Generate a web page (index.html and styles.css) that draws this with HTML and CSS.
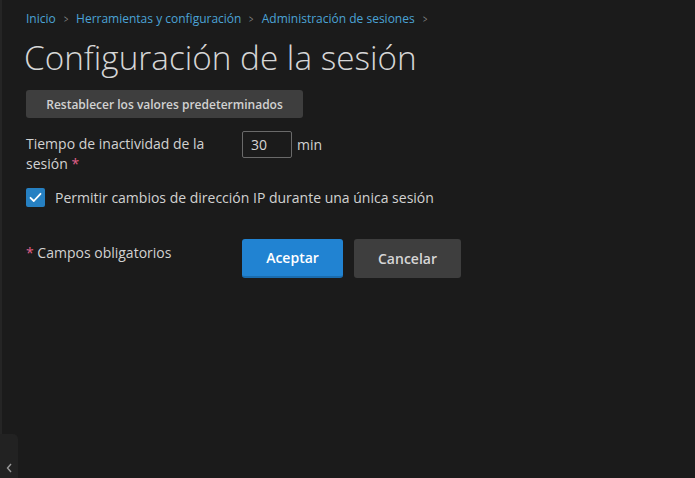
FILE: index.html
```html
<!DOCTYPE html>
<html lang="es">
<head>
<meta charset="utf-8">
<title>Configuración de la sesión</title>
<link rel="stylesheet" href="styles.css">
</head>
<body>
<div class="app">
  <div class="rail"></div>
  <main class="content">
    <nav class="crumbs">
      <a href="#">Inicio</a><span class="sep">&gt;</span>
      <a href="#">Herramientas y configuración</a><span class="sep">&gt;</span>
      <a href="#">Administración de sesiones</a><span class="sep">&gt;</span>
    </nav>
    <h1 class="title">Configuración de la sesión</h1>
    <button class="btn-reset">Restablecer los valores predeterminados</button>
    <div class="field-row">
      <label class="field-label">Tiempo de inactividad de la sesión <span class="req">*</span></label>
      <input class="field-input" type="text" value="30">
      <span class="unit">min</span>
    </div>
    <div class="check-row">
      <span class="checkbox">
        <svg width="13" height="11" viewBox="0 0 13 11"><path d="M1.5 5.8 L4.8 9 L11.5 1.8" fill="none" stroke="#fff" stroke-width="1.8" stroke-linecap="round" stroke-linejoin="round"/></svg>
      </span>
      <span class="check-text">Permitir cambios de dirección IP durante una única sesión</span>
    </div>
    <div class="actions">
      <span class="required-note"><span class="req">*</span> Campos obligatorios</span>
      <button class="btn btn-primary">Aceptar</button>
      <button class="btn btn-secondary">Cancelar</button>
    </div>
  </main>
  <div class="side-tab">
    <svg width="6" height="10" viewBox="0 0 6 10"><path d="M5 1 L1.5 5 L5 9" fill="none" stroke="#9a9a9a" stroke-width="1.4"/></svg>
  </div>
</div>
</body>
</html>
```

FILE: styles.css
```css
html, body {
  margin: 0;
  padding: 0;
  background: #1b1b1b;
  height: 100%;
  overflow: hidden;
}
body {
  font-family: "Open Sans", "Noto Sans", sans-serif;
  color: #d4d4d4;
}
.app {
  position: relative;
  height: 478px;
  display: flex;
}
.rail {
  width: 2px;
  height: 443px;
  background: #252525;
  flex: none;
}
.content {
  flex: 1;
  padding: 10px 0 0 24px;
}
.crumbs {
  font-size: 12px;
  line-height: 17px;
  display: flex;
  align-items: center;
}
.crumbs a {
  color: #4ba3d6;
  text-decoration: none;
}
.crumbs .sep {
  color: #8a8a8a;
  font-size: 11px;
  margin: 0 7px 0 7px;
  transform: scaleX(0.7);
  display: inline-block;
}
.title {
  margin: 10px 0 0 -2px;
  font-weight: 300;
  font-size: 33.3px;
  line-height: 40px;
  color: #d6d6d6;
  letter-spacing: 0;
}
.btn-reset {
  margin-top: 13px;
  width: 277px;
  height: 28px;
  border: 0;
  border-radius: 3px;
  background: #3e3e3e;
  color: #d2d2d2;
  font-family: inherit;
  font-size: 12px;
  font-weight: 600;
  padding: 0;
  display: block;
}
.field-row {
  margin-top: 13px;
  display: flex;
  align-items: flex-start;
}
.field-label {
  width: 200px;
  font-size: 14px;
  line-height: 20px;
  padding-top: 3px;
  color: #d2d2d2;
  margin-right: 16px;
}
.req {
  color: #e0608a;
}
.field-input {
  width: 50px;
  height: 27px;
  box-sizing: border-box;
  background: #1b1b1b;
  border: 1px solid #6a6a6a;
  border-radius: 2px;
  color: #d6d6d6;
  font-family: inherit;
  font-size: 14px;
  padding: 0 0 0 8px;
  margin: 0;
}
.unit {
  font-size: 14px;
  line-height: 27px;
  margin-left: 5px;
  color: #d2d2d2;
}
.check-row {
  margin-top: 14px;
  display: flex;
  align-items: center;
}
.checkbox {
  width: 19px;
  height: 19px;
  border-radius: 2px;
  background: #2680c2;
  display: flex;
  align-items: center;
  justify-content: center;
  margin-right: 10px;
}
.check-text {
  font-size: 14px;
  color: #d2d2d2;
}
.actions {
  margin-top: 32px;
  display: flex;
  align-items: flex-start;
}
.required-note {
  width: 216px;
  font-size: 14px;
  line-height: 20px;
  padding-top: 4px;
  color: #d2d2d2;
}
.btn {
  height: 39px;
  border: 0;
  border-radius: 3px;
  font-family: inherit;
  font-size: 14px;
  font-weight: 600;
  padding: 0;
}
.btn-primary {
  width: 101px;
  background: #2183d2;
  border-bottom: 2px solid #1a6cae;
  color: #ffffff;
}
.btn-secondary {
  width: 107px;
  margin-left: 11px;
  background: #3e3e3e;
  color: #d6d6d6;
}
.side-tab {
  position: absolute;
  left: 0;
  top: 434px;
  width: 18px;
  height: 44px;
  background: #222222;
  border-top-right-radius: 5px;
  display: flex;
  align-items: flex-end;
  justify-content: center;
  padding-bottom: 5px;
  box-sizing: border-box;
}
```
